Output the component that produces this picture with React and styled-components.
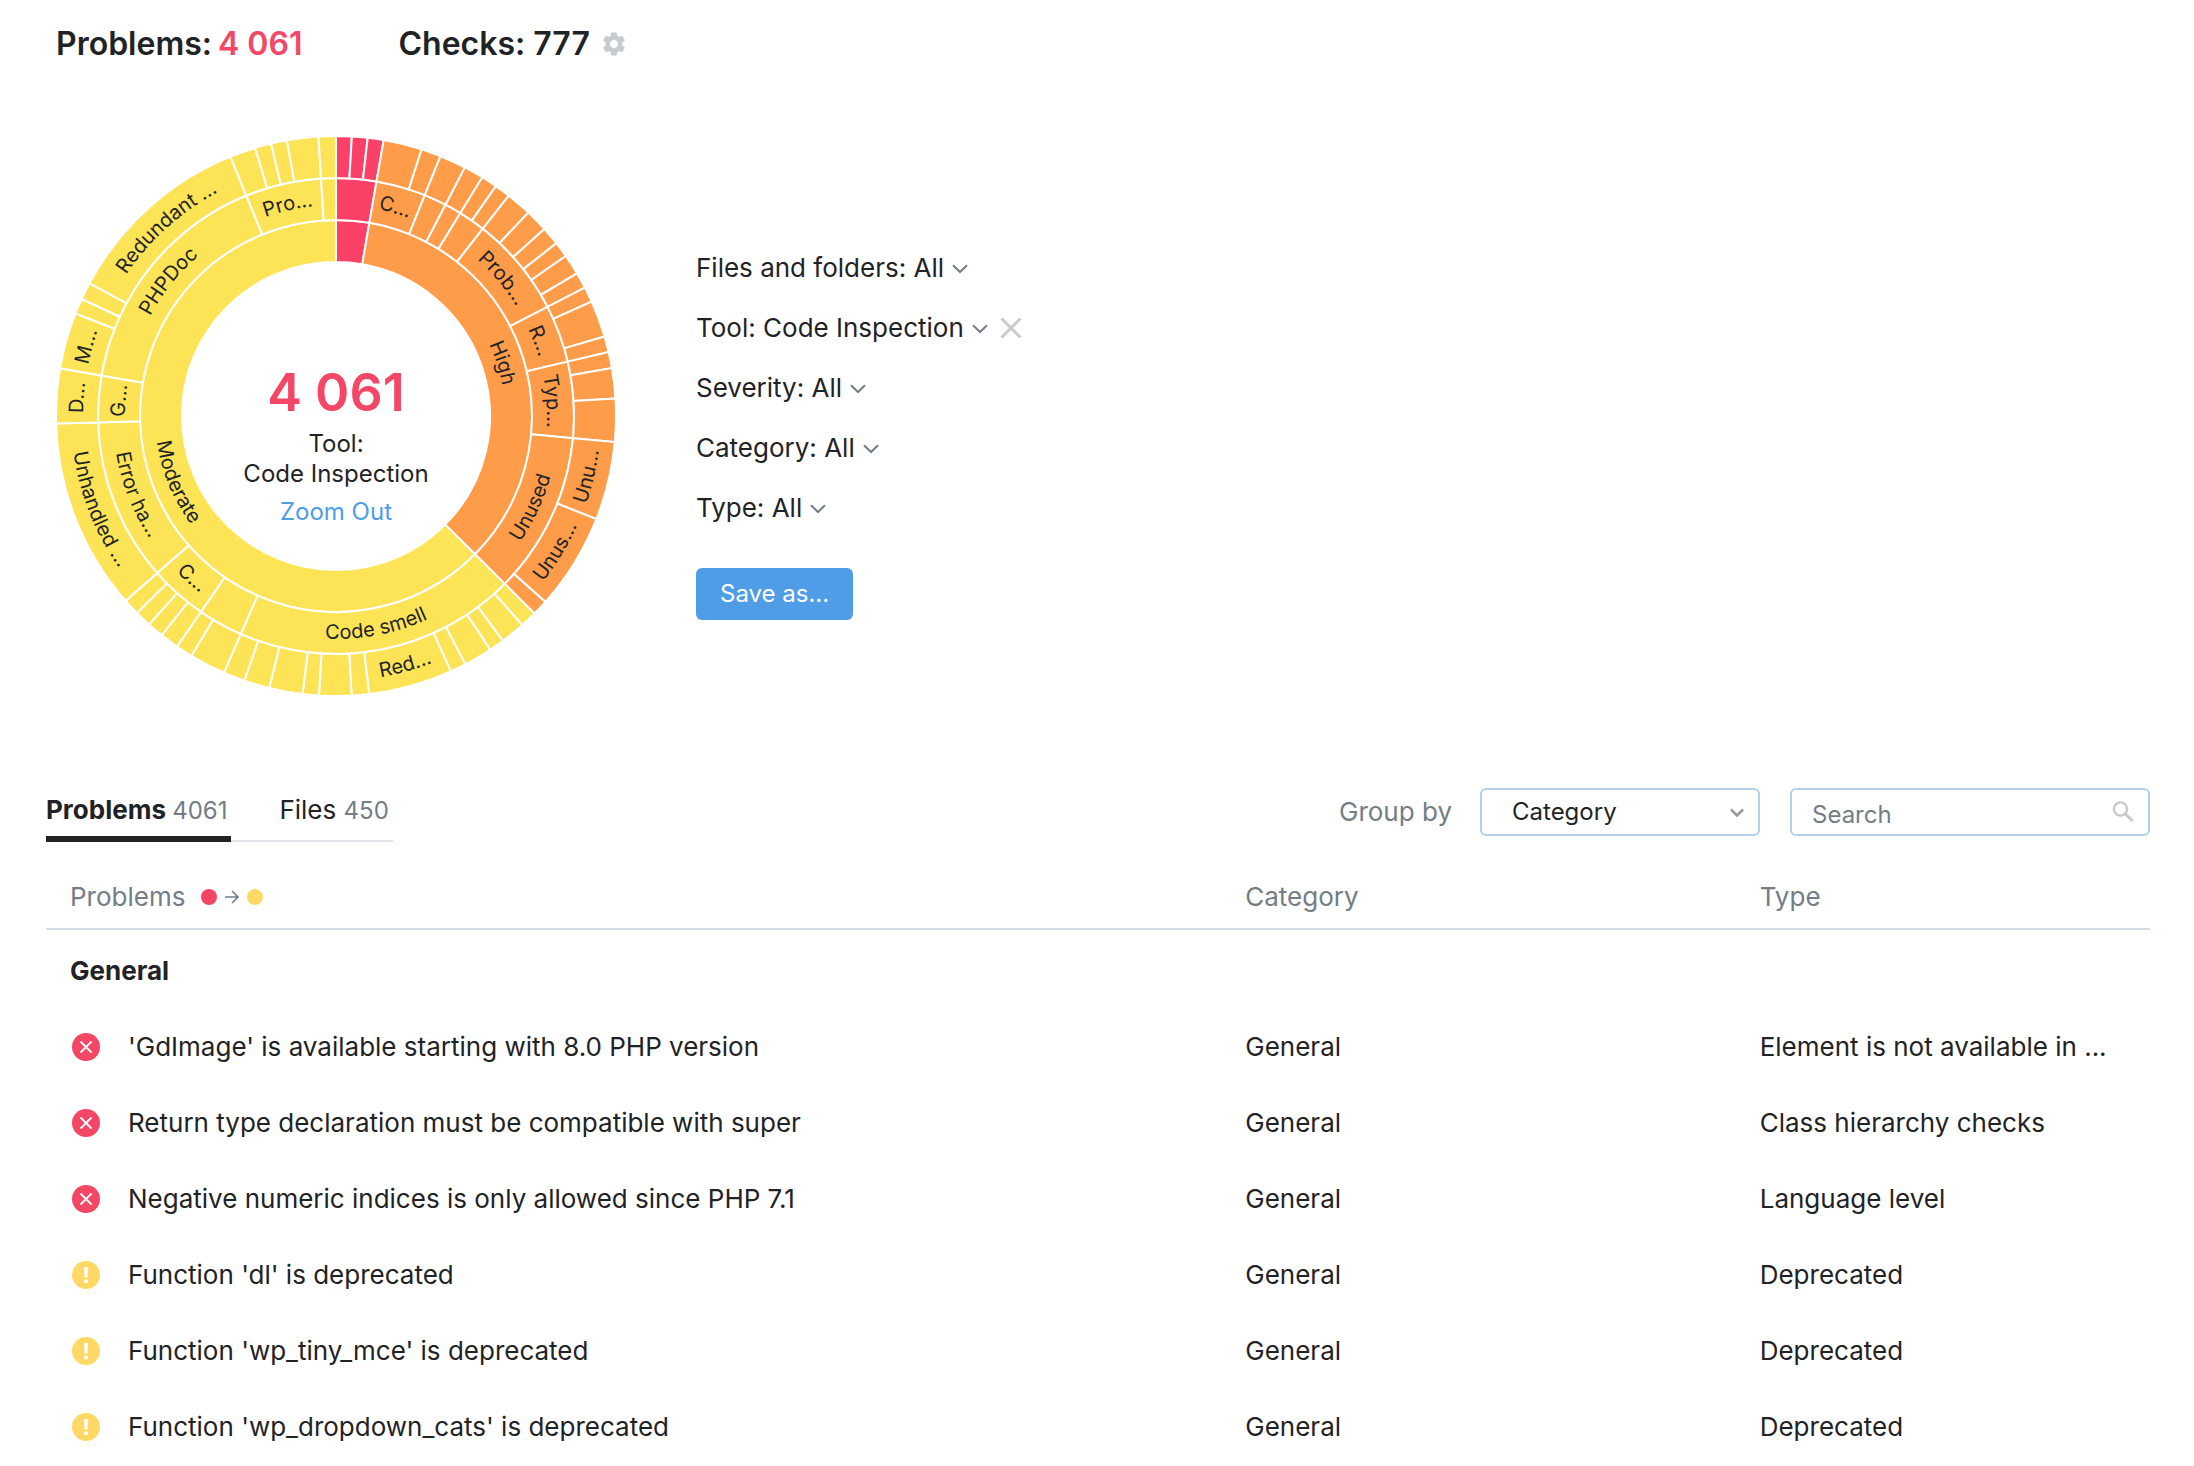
import React, { useId } from "react";
import styled, { createGlobalStyle } from "styled-components";

const palette = {
  ink: "#1f2326",
  muted: "#737d86",
  red: "#f44766",
  yellow: "#ffd966",
  link: "#4e9de6",
  line: "#d3dde8",
  control: "#b4d0e8",
  icon: "#c7cacf",
};

const GlobalStyle = createGlobalStyle`
  *, *::before, *::after { box-sizing: border-box; }
  body {
    margin: 0;
    background: #fff;
    color: ${palette.ink};
    font-family: Inter, "Liberation Sans", sans-serif;
    font-size: 26px;
    line-height: 32px;
  }
  button, input, select { font: inherit; color: inherit; }
`;

const Page = styled.main`
  padding: 0 44px 0 46px;
`;

const Summary = styled.header`
  display: flex;
  align-items: center;
  gap: 96px;
  padding: 24px 10px 0;
`;

const Total = styled.h1`
  display: flex;
  align-items: center;
  gap: 6px;
  margin: 0;
  font-size: 32px;
  line-height: 40px;
  font-weight: 600;
`;

const Accent = styled.span`
  color: ${palette.red};
`;

const IconButton = styled.button`
  display: inline-flex;
  padding: 0;
  margin-left: ${(p) => p.$space || 0}px;
  border: 0;
  background: none;
  cursor: pointer;
`;

const Overview = styled.section`
  display: flex;
  align-items: flex-start;
  gap: 80px;
  padding: 72px 10px 0;
`;

const ChartBox = styled.figure`
  position: relative;
  flex: none;
  margin: 0;
  width: 560px;
`;

const ChartSvg = styled.svg`
  display: block;
  width: 100%;
`;

const Slice = styled.path`
  fill: ${(p) => p.$color};
  stroke: #fff;
  stroke-width: 2px;
`;

const SliceLabel = styled.text`
  font-size: 20px;
  fill: ${palette.ink};
  text-anchor: middle;
`;

const ChartCenter = styled.figcaption`
  position: absolute;
  inset: 0;
  display: flex;
  flex-direction: column;
  align-items: center;
  justify-content: center;
  padding-top: 56px;
  font-size: 24px;
  line-height: 30px;
  text-align: center;
`;

const BigNumber = styled.strong`
  color: ${palette.red};
  font-size: 52px;
  line-height: 64px;
  font-weight: 600;
  padding-bottom: 4px;
`;

const ZoomLink = styled.a`
  color: ${palette.link};
  text-decoration: none;
  padding-top: 8px;
`;

const Filters = styled.div`
  display: flex;
  flex-direction: column;
  align-items: flex-start;
  gap: 28px;
  padding-top: 116px;
`;

const FilterRow = styled.div`
  display: flex;
  align-items: center;
`;

const FilterButton = styled.button`
  display: inline-flex;
  align-items: center;
  gap: 8px;
  padding: 0;
  border: 0;
  background: none;
  cursor: pointer;
`;

const SaveButton = styled.button`
  margin-top: 16px;
  height: 52px;
  padding: 0 24px;
  border: 0;
  border-radius: 6px;
  background: ${palette.link};
  color: #fff;
  font-size: 24px;
  cursor: pointer;
`;

const Toolbar = styled.div`
  display: flex;
  justify-content: space-between;
  align-items: flex-end;
  padding-top: 90px;
`;

const Tabs = styled.nav`
  display: flex;
  height: 56px;
  border-bottom: 2px solid #dfe5eb;
`;

const Tab = styled.a`
  height: 56px;
  padding: ${(p) => (p.$active ? "8px 4px 0 0" : "8px 4px 0 48px")};
  border-bottom: ${(p) => (p.$active ? `6px solid ${palette.ink}` : "0")};
  color: ${palette.ink};
  font-weight: ${(p) => (p.$active ? 700 : 400)};
  text-decoration: none;
`;

const Count = styled.span`
  color: ${palette.muted};
  font-size: 24px;
  font-weight: 400;
`;

const Controls = styled.div`
  display: flex;
  align-items: center;
  padding-bottom: 6px;
`;

const GroupLabel = styled.label`
  color: ${palette.muted};
  margin-right: 28px;
`;

const Field = styled.div`
  position: relative;
  width: ${(p) => p.$width}px;
  margin-left: ${(p) => p.$space || 0}px;

  svg {
    position: absolute;
    right: ${(p) => p.$inset}px;
    top: 50%;
    transform: translateY(-50%);
    pointer-events: none;
  }
`;

const Select = styled.select`
  appearance: none;
  display: block;
  width: 100%;
  height: 48px;
  padding: 0 48px 0 30px;
  border: 2px solid ${palette.control};
  border-radius: 6px;
  background: #fff;
  font-size: 24px;
`;

const SearchInput = styled.input`
  display: block;
  width: 100%;
  height: 48px;
  padding: 4px 56px 0 20px;
  border: 2px solid ${palette.control};
  border-radius: 6px;
  background: #fff;
  font-size: 24px;

  &::placeholder { color: ${palette.muted}; opacity: 1; }
`;

const Table = styled.table`
  width: 100%;
  table-layout: fixed;
  border-collapse: collapse;
  margin-top: 24px;
  text-align: left;
`;

const HeadCell = styled.th`
  width: ${(p) => p.$width || "auto"};
  height: 63px;
  padding: ${(p) => (p.$first ? "0 0 0 24px" : "0")};
  border-bottom: 2px solid ${palette.line};
  color: ${palette.muted};
  font-weight: 400;
`;

const SortLabel = styled.span`
  display: flex;
  align-items: center;
  gap: 8px;
`;

const Dot = styled.i`
  width: 16px;
  height: 16px;
  border-radius: 50%;
  background: ${(p) => p.$color};
  margin-left: ${(p) => p.$space || 0}px;
`;

const GroupCell = styled.th`
  height: 80px;
  padding: 2px 0 0 24px;
  font-weight: 700;
`;

const Cell = styled.td`
  height: 76px;
  padding: 0;
  white-space: nowrap;
`;

const Problem = styled.div`
  display: flex;
  align-items: center;
  gap: 28px;
  padding-left: 26px;
`;

/* ---- icons ---- */

const Chevron = ({ size = 16, color = palette.muted, weight = 2 }) => (
  <svg width={size} height={size} viewBox="0 0 16 16" fill="none" stroke={color} strokeWidth={weight} aria-hidden="true">
    <path d="M1 5.2 8 12l7-6.8" />
  </svg>
);

const Gear = () => (
  <svg width="24" height="24" viewBox="0 0 24 24" fill={palette.icon} stroke={palette.icon} strokeLinejoin="round" aria-hidden="true">
    <path
      fillRule="evenodd"
      d="M9.6 1h4.8l.6 3.400 1.800 1 3.200-1.100 2.400 4-2.600 2.300v2.800l2.600 2.300-2.400 4-3.200-1.100-1.800 1-.6 3.400H9.600L9 19.600l-1.800-1L4 19.700l-2.400-4 2.600-2.300v-2.800L1.600 8.300l2.400-4 3.200 1.100 1.800-1zM12 7.500a4.500 4.500 0 1 0 0 9 4.500 4.500 0 0 0 0-9z"
    />
  </svg>
);

const Cross = () => (
  <svg width="22" height="22" viewBox="0 0 22 22" stroke={palette.icon} strokeWidth="3" aria-hidden="true">
    <path d="M1.500 1.500l19 19M20.500 1.500l-19 19" />
  </svg>
);

const Magnifier = () => (
  <svg width="22" height="22" viewBox="0 0 22 22" fill="none" stroke={palette.icon} strokeWidth="2.400" aria-hidden="true">
    <circle cx="8.500" cy="8" r="6.600" />
    <path d="M13 12.500l7.500 7.500" strokeWidth="3" />
  </svg>
);

const Arrow = () => (
  <svg width="14" height="14" viewBox="0 0 14 14" fill="none" stroke={palette.muted} strokeWidth="1.600" aria-hidden="true">
    <path d="M0 7h13M7 1l6 6-6 6" />
  </svg>
);

const ErrorIcon = () => (
  <svg width="28" height="28" viewBox="0 0 28 28" role="img" aria-label="High severity">
    <circle cx="14" cy="14" r="14" fill={palette.red} />
    <path d="M8.500 8.500l11 11M19.500 8.500l-11 11" stroke="#fff" strokeWidth="1.800" />
  </svg>
);

const WarningIcon = () => (
  <svg width="28" height="28" viewBox="0 0 28 28" role="img" aria-label="Moderate severity">
    <circle cx="14" cy="14" r="14" fill={palette.yellow} />
    <path d="M12 6h4l-.5 10.500h-3z" fill="#fff" />
    <circle cx="14" cy="20.300" r="2.100" fill="#fff" />
  </svg>
);

/* ---- sunburst ---- */

const RED = "#fb4167";
const ORANGE = "#ff9c49";
const YELLOW = "#fde456";
const CENTER = 280;
const RING = 42;
const INNER = 154;

const colorAt = (angle) => (angle < 9.8 ? RED : angle < 134.8 ? ORANGE : YELLOW);

const rings = [
  { ends: [9.8, 134.86, 360], labels: { 1: "High", 2: "Moderate" } },
  {
    ends: [9.8, 21.9, 27.4, 31.5, 38.1, 62.7, 76.8, 95.34, 134.86, 203.6, 214.6, 228.7, 268.45, 279.8, 337.86, 356.4, 360],
    labels: {
      1: "C...", 5: "Prob...", 6: "R...", 7: "Typ...", 8: "Unused", 9: "Code smell",
      11: "C...", 12: "Error ha...", 13: "G...", 14: "PHPDoc", 15: "Pro...",
    },
  },
  {
    ends: [
      3.24, 6.5, 9.8, 17.8, 21.9, 27.4, 31.5, 34.8, 38.1, 43.4, 48.1, 51.9, 55.15, 59.4, 62.7, 65.9, 73.5, 76.8,
      80.15, 86.4, 95.34, 111.6, 131.6, 134.86, 138.3, 143.4, 146.6, 152.5, 155.8, 173.2, 176.8, 183.5, 186.85,
      193.8, 199.1, 203.6, 211.1, 214.6, 218.5, 221.9, 225.3, 228.7, 268.45, 279.8, 291.5, 294.7, 298.3, 337.86,
      343.2, 346.6, 349.9, 356.4, 360,
    ],
    labels: {
      21: "Unu...", 22: "Unus...", 29: "Red...", 42: "Unhandled ...", 43: "D...", 44: "M...", 47: "Redundant ...",
    },
  },
];

const point = (radius, angle) => {
  const rad = (angle * Math.PI) / 180;
  return `${(CENTER + radius * Math.sin(rad)).toFixed(2)} ${(CENTER - radius * Math.cos(rad)).toFixed(2)}`;
};

const arc = (radius, from, to) =>
  `A${radius} ${radius} 0 ${Math.abs(to - from) > 180 ? 1 : 0} ${to > from ? 1 : 0} ${point(radius, to)}`;

const slicePath = (r0, r1, a0, a1) =>
  `M${point(r1, a0)}${arc(r1, a0, a1)}L${point(r0, a1)}${arc(r0, a1, a0)}Z`;

const labelPath = (r0, a0, a1) => {
  const mid = (a0 + a1) / 2;
  const upright = mid < 90 || mid > 270;
  const radius = r0 + RING / 2 + (upright ? -6 : 6);
  const [from, to] = upright ? [mid - 40, mid + 40] : [mid + 40, mid - 40];
  return `M${point(radius, from)}${arc(radius, from, to)}`;
};

function Sunburst() {
  const id = useId();
  const slices = rings.flatMap(({ ends, labels }, level) =>
    ends.map((end, i) => ({
      key: `${id}-${level}-${i}`,
      r0: INNER + RING * level,
      start: i ? ends[i - 1] : 0,
      end,
      label: labels[i],
    }))
  );
  return (
    <ChartSvg viewBox="0 0 560 560" role="img" aria-label="Problems by severity, category and type">
      {slices.map((s) => (
        <Slice key={s.key} $color={colorAt(s.start)} d={slicePath(s.r0, s.r0 + RING, s.start, s.end)} />
      ))}
      {slices.filter((s) => s.label).map((s) => (
        <React.Fragment key={s.key}>
          <path id={s.key} d={labelPath(s.r0, s.start, s.end)} fill="none" />
          <SliceLabel>
            <textPath href={`#${s.key}`} startOffset="50%">{s.label}</textPath>
          </SliceLabel>
        </React.Fragment>
      ))}
    </ChartSvg>
  );
}

/* ---- data ---- */

const filters = [
  { name: "Files and folders", value: "All" },
  { name: "Tool", value: "Code Inspection", clearable: true },
  { name: "Severity", value: "All" },
  { name: "Category", value: "All" },
  { name: "Type", value: "All" },
];

const problems = [
  { high: true, text: "'GdImage' is available starting with 8.0 PHP version", type: "Element is not available in ..." },
  { high: true, text: "Return type declaration must be compatible with super", type: "Class hierarchy checks" },
  { high: true, text: "Negative numeric indices is only allowed since PHP 7.1", type: "Language level" },
  { text: "Function 'dl' is deprecated", type: "Deprecated" },
  { text: "Function 'wp_tiny_mce' is deprecated", type: "Deprecated" },
  { text: "Function 'wp_dropdown_cats' is deprecated", type: "Deprecated" },
];

export default function App() {
  return (
    <>
      <GlobalStyle />
      <Page>
        <Summary>
          <Total>Problems: <Accent>4 061</Accent></Total>
          <Total>
            Checks: 777
            <IconButton $space={6} aria-label="Configure checks"><Gear /></IconButton>
          </Total>
        </Summary>

        <Overview>
          <ChartBox>
            <Sunburst />
            <ChartCenter>
              <BigNumber>4 061</BigNumber>
              <span>Tool:</span>
              <span>Code Inspection</span>
              <ZoomLink href="#zoom-out">Zoom Out</ZoomLink>
            </ChartCenter>
          </ChartBox>
          <Filters>
            {filters.map((f) => (
              <FilterRow key={f.name}>
                <FilterButton>{f.name}: {f.value}<Chevron /></FilterButton>
                {f.clearable && (
                  <IconButton $space={12} aria-label={`Clear ${f.name}`}><Cross /></IconButton>
                )}
              </FilterRow>
            ))}
            <SaveButton>Save as...</SaveButton>
          </Filters>
        </Overview>

        <Toolbar>
          <Tabs>
            <Tab href="#problems" $active>Problems <Count>4061</Count></Tab>
            <Tab href="#files">Files <Count>450</Count></Tab>
          </Tabs>
          <Controls>
            <GroupLabel htmlFor="group-by">Group by</GroupLabel>
            <Field $width={280} $inset={16}>
              <Select id="group-by" defaultValue="Category">
                <option>Category</option>
              </Select>
              <Chevron size={14} color="#999" weight={3} />
            </Field>
            <Field $width={360} $space={30} $inset={16}>
              <SearchInput type="text" placeholder="Search" aria-label="Search" />
              <Magnifier />
            </Field>
          </Controls>
        </Toolbar>

        <Table>
          <thead>
            <tr>
              <HeadCell $first $width="57%">
                <SortLabel>
                  Problems
                  <Dot $color={palette.red} $space={8} />
                  <Arrow />
                  <Dot $color={palette.yellow} />
                </SortLabel>
              </HeadCell>
              <HeadCell $width="24.45%">Category</HeadCell>
              <HeadCell>Type</HeadCell>
            </tr>
          </thead>
          <tbody>
            <tr><GroupCell colSpan={3}>General</GroupCell></tr>
            {problems.map((p) => (
              <tr key={p.text}>
                <Cell>
                  <Problem>{p.high ? <ErrorIcon /> : <WarningIcon />}{p.text}</Problem>
                </Cell>
                <Cell>General</Cell>
                <Cell>{p.type}</Cell>
              </tr>
            ))}
          </tbody>
        </Table>
      </Page>
    </>
  );
}
